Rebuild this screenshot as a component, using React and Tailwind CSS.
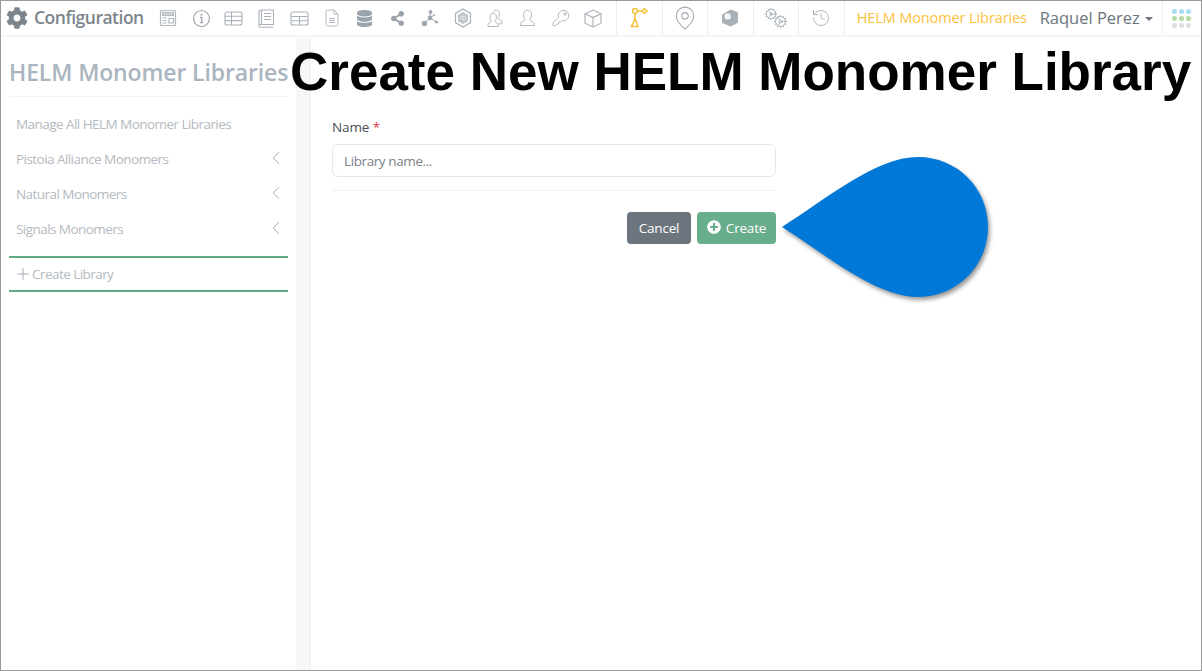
import { ChevronLeft, Plus, MapPin, History, Cog } from 'lucide-react';
import { FaCog, FaPlusCircle, FaDatabase, FaShareAlt } from 'react-icons/fa';

const font = { fontFamily: '"Open Sans", "Noto Sans", sans-serif' };

function LayoutIcon() {
  return (
    <svg width="18" height="18" viewBox="0 0 18 18" fill="none" stroke="#b3bac1" strokeWidth="1.2">
      <rect x="1.5" y="1.5" width="15" height="15" rx="1" />
      <rect x="3.5" y="3.5" width="11" height="3" fill="#d3d7db" />
      <path d="M3.5 9h4M3.5 11.5h4M3.5 14h4M10 9.5h4.5v4.5H10z" />
    </svg>
  );
}

function InfoIcon() {
  return (
    <svg width="19" height="19" viewBox="0 0 19 19" fill="none" stroke="#a0a9b2" strokeWidth="1.2">
      <circle cx="9.5" cy="9.5" r="8" />
      <circle cx="9.5" cy="5.8" r="1" fill="#a0a9b2" stroke="none" />
      <path d="M8 8.5h1.7v5M7.8 13.6h3.6" strokeWidth="1.4" />
    </svg>
  );
}

function TableRowsIcon() {
  return (
    <svg width="19" height="15" viewBox="0 0 19 15" fill="none" stroke="#a9b1b9" strokeWidth="1.1">
      <rect x="1" y="1" width="17" height="13" rx="2" />
      <path d="M1 5.2h17M1 9.6h17M7.5 1v13" />
    </svg>
  );
}

function TableHeadIcon() {
  return (
    <svg width="19" height="15" viewBox="0 0 19 15" fill="none" stroke="#a9b1b9" strokeWidth="1.1">
      <rect x="1" y="1" width="17" height="13" rx="2" />
      <path d="M1 5.5h17M1 9.8h17M9.5 5.5V14" />
    </svg>
  );
}

function DocIcon() {
  return (
    <svg width="14" height="18" viewBox="0 0 14 18" fill="none" stroke="#b3bac1" strokeWidth="1">
      <path d="M1 2.5C1 1.6 1.6 1 2.5 1H9l4 4v10.5c0 .9-.6 1.5-1.5 1.5h-9C1.6 17 1 16.4 1 15.5z" />
      <path d="M9 1v4h4M4 9.5h6M4 11.5h6M4 13.5h6" />
    </svg>
  );
}

function BookIcon() {
  return (
    <svg width="17" height="19" viewBox="0 0 17 19" fill="none" stroke="#a9b1b9" strokeWidth="1.1">
      <path d="M3.5 1h12v14.5h-12zM3.5 1C2 1 1 1.8 1 3v14c0 .8.7 1.2 1.5 1.2h13M1 16.5c0-.7.7-1 1.5-1h1" />
      <path d="M6 4.5h7M6 7.5h7M6 10.5h7" />
    </svg>
  );
}

function MoleculeIcon() {
  return (
    <svg width="18" height="18" viewBox="0 0 18 18" fill="#a0a9b2" stroke="#a0a9b2">
      <path d="M9.5 3 9 9 4 14M9 9l6 3.5M9 9l3.5-2.5" strokeWidth="1" fill="none" />
      <circle cx="9.5" cy="3" r="2" stroke="none" />
      <circle cx="9" cy="9" r="2.4" stroke="none" />
      <circle cx="3.5" cy="14.5" r="2.8" stroke="none" />
      <circle cx="15.5" cy="13" r="1.6" stroke="none" />
      <circle cx="13" cy="6" r="1" stroke="none" />
    </svg>
  );
}

function HexIcon() {
  return (
    <svg width="18" height="20" viewBox="0 0 18 20" fill="none" stroke="#a9b1b9">
      <path d="M9 1l7.5 4.4v9.2L9 19l-7.5-4.4V5.4z" strokeWidth="1.2" />
      <path d="M9 4l5 2.9v6.2L9 16l-5-2.9V6.9z" fill="#bdc3ca" stroke="none" />
      <ellipse cx="9" cy="10" rx="3" ry="2" stroke="#e6e9ec" strokeWidth="1" />
      <path d="M9 8v4" stroke="#e6e9ec" strokeWidth="1" />
    </svg>
  );
}

function UsersIcon() {
  return (
    <svg width="18" height="19" viewBox="0 0 18 19" fill="none" stroke="#b3bac1" strokeWidth="1">
      <path d="M2 17.5v-2.2c0-1.2 3.7-1.8 3.7-3.2C4.4 11 4 9.4 4 7.8 4 5.4 5.2 4 7.2 4s3.2 1.4 3.2 3.8c0 1.6-.4 3.2-1.7 4.3 0 1.4 3.7 2 3.7 3.2v2.2z" />
      <path d="M7.5 2.2C8.2 1.4 9.2 1 10.3 1c2 0 3.2 1.4 3.2 3.800 0 1.600-.4 3.200-1.700 4.300 0 1.400 4.200 2 4.200 3.700v2h-3.500" />
    </svg>
  );
}

function UserIcon() {
  return (
    <svg width="17" height="18" viewBox="0 0 17 18" fill="none" stroke="#b3bac1" strokeWidth="1">
      <path d="M1.5 16.5v-2c0-1.700 4.800-2.300 4.800-4C4.900 9.200 4.500 7.500 4.500 5.500 4.500 2.800 6.100 1.200 8.500 1.200s4 1.600 4 4.300c0 2-.4 3.700-1.800 5 0 1.700 4.800 2.300 4.800 4v2z" />
    </svg>
  );
}

function KeyIcon() {
  return (
    <svg width="18" height="18" viewBox="0 0 18 18" fill="none" stroke="#b3bac1" strokeWidth="1">
      <path d="M6.600 8.200A5.200 5.200 0 1 1 10 11.500L8.300 13.200H6.500V15H4.800L3.500 16.700H1V14z" />
      <circle cx="13" cy="5" r="1.200" />
    </svg>
  );
}

function CubeIcon() {
  return (
    <svg width="18" height="19" viewBox="0 0 18 19" fill="none" stroke="#a9b1b9" strokeWidth="1.1">
      <path d="M9 1l8 3.800v9.400L9 18l-8-3.800V4.800zM1 4.800l8 3.800 8-3.800M9 8.600V18" />
    </svg>
  );
}

function HelmIcon() {
  return (
    <svg width="20" height="22" viewBox="0 0 20 22" fill="none" stroke="#f5c23b" strokeWidth="1.5">
      <circle cx="6" cy="4" r="2.400" />
      <path d="M15.500 1.500l2.600 2.500-2.600 2.500L13 4z" />
      <path d="M8.400 4H13M6 6.400v5" />
      <path d="M6 11.500l3 8H2.500z" />
    </svg>
  );
}

function ShieldIcon() {
  return (
    <svg width="18" height="18" viewBox="0 0 17 17" fill="#a7afb7">
      <path d="M9 .5l7 2.500v10l-7 3.500-8-3.500V5.500z" />
      <circle cx="6.300" cy="7" r="3" fill="#f3f4f6" />
    </svg>
  );
}

function GearsIcon() {
  return (
    <span className="relative block h-[22px] w-[24px] text-[#9ba4ad]">
      <Cog size={14} strokeWidth={1.3} className="absolute left-0 top-0" />
      <Cog size={15} strokeWidth={1.3} className="absolute bottom-0 right-0" />
    </span>
  );
}

function AppGrid() {
  const colors = [
    'bg-[#a8dcf5]', 'bg-[#a8dcf5]', 'bg-[#a8dcf5]',
    'bg-[#b5dba3]', 'bg-[#b5dba3]', 'bg-[#b5dba3]',
    'bg-[#dcdfe2]', 'bg-[#dcdfe2]', 'bg-[#dcdfe2]',
  ];
  return (
    <div className="grid grid-cols-3 gap-x-[2px] gap-y-[2px]">
      {colors.map((c, i) => (
        <span key={i} className={`h-[5px] w-[5px] rounded-full ${c}`} />
      ))}
    </div>
  );
}

const toolIcons = [
  <LayoutIcon />,
  <InfoIcon />,
  <TableRowsIcon />,
  <BookIcon />,
  <TableHeadIcon />,
  <DocIcon />,
  <FaDatabase size={17} className="text-[#9aa3ab]" />,
  <FaShareAlt size={15} className="text-[#9aa3ab]" />,
  <MoleculeIcon />,
  <HexIcon />,
  <UsersIcon />,
  <UserIcon />,
  <KeyIcon />,
  <CubeIcon />,
];

const sideIcons = [
  { icon: <HelmIcon />, w: 'w-[46px]' },
  { icon: <MapPin size={26} strokeWidth={1} className="text-[#a0a9b2]" />, w: 'w-[45px]' },
  { icon: <ShieldIcon />, w: 'w-[46px]' },
  { icon: <GearsIcon />, w: 'w-[45px]' },
  { icon: <History size={20} strokeWidth={1} className="text-[#a0a9b2]" />, w: 'w-[46px]' },
];

const menu = [
  { label: 'Manage All HELM Monomer Libraries' },
  { label: 'Pistoia Alliance Monomers', more: true },
  { label: 'Natural Monomers', more: true },
  { label: 'Signals Monomers', more: true },
];

export default function App() {
  return (
    <div style={font} className="relative flex h-[671px] w-[1202px] flex-col overflow-hidden border border-[#9a9a9a] bg-white">
      {/* Top bar */}
      <header className="flex h-[36px] shrink-0 items-center border-b-2 border-[#f3f5f7] text-[#6c757d]">
        <div className="flex w-[151px] shrink-0 items-center gap-[6px] pl-[5px]">
          <FaCog size={22} className="text-[#7d858c]" />
          <span className="-mt-[2px] text-[17.5px] font-semibold tracking-[-0.5px] text-[#7d858c]">Configuration</span>
        </div>
        <div className="flex shrink-0 items-center">
          {toolIcons.map((icon, i) => (
            <span key={i} className="flex h-[24px] w-[32.7px] items-center justify-center">{icon}</span>
          ))}
        </div>
        <div className="ml-[6px] flex h-full items-stretch">
          {sideIcons.map((item, i) => (
            <span key={i} className={`flex ${item.w} items-center justify-center border-l border-[#edf0f3]`}>{item.icon}</span>
          ))}
        </div>
        <div className="flex h-full w-[196px] shrink-0 items-center border-l border-[#edf0f3] pl-[12px] text-[14.5px] tracking-[-0.1px] whitespace-nowrap text-[#fcc23e]">
          HELM Monomer Libraries
        </div>
        <div className="flex w-[122px] shrink-0 items-center gap-[5px] text-[16.5px] whitespace-nowrap text-[#6c757d]">
          Raquel Perez
          <span className="mt-[2px] h-0 w-0 border-x-[4px] border-t-[4px] border-x-transparent border-t-[#6c757d]" />
        </div>
        <div className="flex h-full flex-1 items-center justify-center border-l border-[#edf0f3]">
          <AppGrid />
        </div>
      </header>

      <div className="flex min-h-0 flex-1">
        {/* Sidebar */}
        <aside className="w-[295px] shrink-0 px-[8px]">
          <h2 className="flex h-[60px] items-center border-b border-[#f3f5f7] pt-[12px] text-[23px] font-semibold tracking-[-0.13px] whitespace-nowrap text-[#aab5c0]">
            HELM Monomer Libraries
          </h2>
          <nav className="pt-[10px] text-[13.5px] tracking-[-0.55px] text-[#b4bac0]">
            {menu.map((item) => (
              <div key={item.label} className="flex h-[35px] items-center justify-between pl-[7px] pr-[1px] whitespace-nowrap">
                {item.label}
                {item.more && <ChevronLeft size={22} strokeWidth={1} className="-mt-[3px] text-[#9ba3ab]" />}
              </div>
            ))}
            <div className="mt-[9px] flex h-[36px] items-center gap-0 border-y-2 border-[#5fa884] pl-[5px]">
              <Plus size={18} strokeWidth={1.2} className="text-[#9ba3ab]" />
              Create Library
            </div>
          </nav>
        </aside>

        {/* Gutter */}
        <div className="mt-[1px] w-[15px] shrink-0 border-r border-[#eceff2] bg-[#f6f7f9]" />

        {/* Form */}
        <main className="ml-[21px] w-[444px] shrink-0 pt-[80px] text-[14px]">
          <label className="block text-[13.5px] tracking-[-0.1px] text-[#495057]">
            Name <span className="text-[#dc3545]">*</span>
          </label>
          <input
            type="text"
            placeholder="Library name..."
            className="mt-[7px] h-[33px] w-full rounded-[6px] border border-[#e5e8eb] px-[11px] text-[13.5px] tracking-[-0.4px] outline-none placeholder:text-[#7a8289]"
          />
          <div className="mt-[13px] border-t border-[#eff1f3]" />
          <div className="mt-[21px] flex justify-end gap-[6px] text-[13.5px] tracking-[-0.2px] text-white">
            <button className="h-[32px] w-[64px] rounded-[4px] bg-[#6c757d]">Cancel</button>
            <button className="flex h-[32px] w-[79px] items-center justify-center gap-[5px] rounded-[4px] bg-[#68ae8c]">
              <FaPlusCircle size={14} className="-mt-[2px]" />
              Create
            </button>
          </div>
        </main>
      </div>

      {/* Annotation overlays */}
      <div
        style={{ fontFamily: '"Liberation Sans", Arial, sans-serif' }}
        className="absolute left-[289px] top-[39px] text-[53px] leading-[64px] font-bold whitespace-nowrap text-black"
      >
        Create New HELM Monomer Library
      </div>
      <svg className="absolute left-[775px] top-[150px] overflow-visible drop-shadow-[2px_3px_2px_rgba(0,0,0,0.4)]" width="220" height="150" viewBox="0 0 220 150">
        <path d="M6 76 C50 48 100 6 142 6 C181 6 212 37 212 76 C212 115 181 146 142 146 C100 146 50 104 6 76 Z" fill="#0078d7" />
      </svg>
    </div>
  );
}
